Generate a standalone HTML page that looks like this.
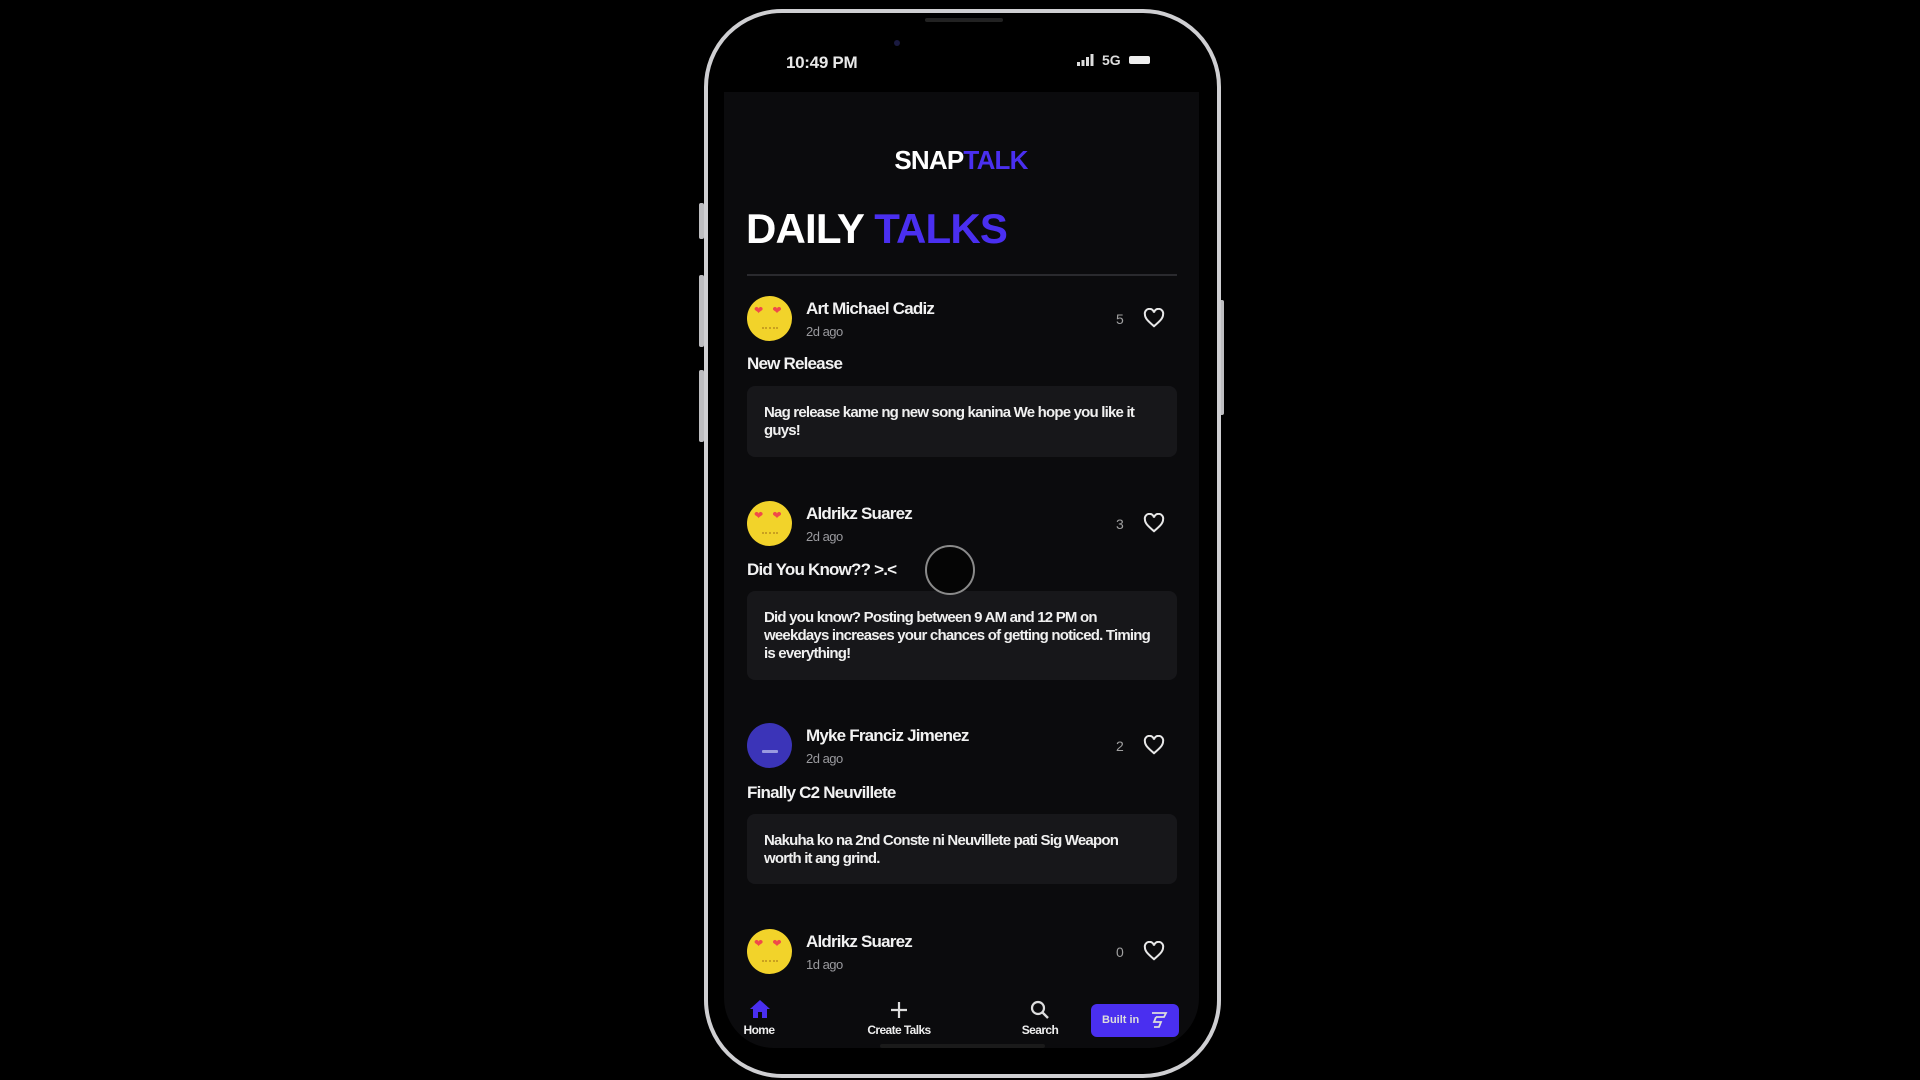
<!DOCTYPE html>
<html><head><meta charset="utf-8"><style>
*{margin:0;padding:0;box-sizing:border-box}
body{width:1920px;height:1080px;background:#000;position:relative;overflow:hidden;font-family:"Liberation Sans",Arial,sans-serif;color:#fff}
.a{position:absolute}
.frame{left:704px;top:9px;width:517px;height:1069px;border:4px solid #cfcfd2;border-radius:78px;background:#000}
.btn{background:#bdbdc0;width:5px;left:699px;border-radius:2px}
.screen{left:724px;top:92px;width:475px;height:956px;background:#0b0b0d;border-radius:0 0 50px 50px}
.name{font-size:17px;font-weight:bold;letter-spacing:-0.8px;color:#f2f2f2}
.date{font-size:13px;color:#9a9a9e;letter-spacing:-0.5px}
.title{font-size:17px;font-weight:bold;letter-spacing:-0.8px;color:#f2f2f2}
.box{left:747px;width:430px;background:#17171a;border-radius:8px;padding:0 24px 0 17px;font-size:15px;font-weight:bold;letter-spacing:-0.8px;line-height:18px;color:#f0f0f0}
.cnt{font-size:14px;color:#a0a0a0;left:1116px}
.av{width:45px;height:45px;border-radius:50%;left:747px;background:#f2d32a}
.nav{font-size:12px;font-weight:bold;letter-spacing:-0.6px;color:#eee;text-align:center;width:100px}
.eyes{font-size:11px;color:#f04a4a;left:754px}
.m{left:762px;width:16px;height:2px;border-top:2px dotted #c9a020}
</style></head><body>
<div class="a btn" style="top:203px;height:36px"></div>
<div class="a btn" style="top:275px;height:72px"></div>
<div class="a btn" style="top:370px;height:72px"></div>
<div class="a btn" style="left:1219px;top:300px;height:115px"></div>
<div class="a frame"></div>
<div class="a" style="left:925px;top:18px;width:78px;height:4px;background:#222;border-radius:2px"></div>
<div class="a" style="left:894px;top:40px;width:6px;height:6px;border-radius:50%;background:#1a1a40"></div>
<div class="a" style="left:786px;top:53px;font-size:17px;font-weight:bold;color:#e8e8e8;letter-spacing:-0.3px">10:49 PM</div>
<svg class="a" style="left:1077px;top:53px" width="78" height="14"><rect x="0" y="9" width="3" height="4" fill="#ddd"/><rect x="4.5" y="7" width="3" height="6" fill="#ddd"/><rect x="9" y="4" width="3" height="9" fill="#ddd"/><rect x="13.5" y="1" width="3" height="12" fill="#ddd"/><text x="25" y="12" font-size="14" font-weight="bold" fill="#ddd" font-family="Liberation Sans">5G</text><rect x="52" y="3" width="21" height="8" rx="2" fill="#eee"/></svg>
<div class="a screen"></div>
<div class="a" style="left:0;width:1920px;top:145px;text-align:center;font-size:26px;font-weight:bold;letter-spacing:-0.8px;padding-left:2px">SNAP<span style="color:#4a2ff0">TALK</span></div>
<div class="a" style="left:746px;top:205px;font-size:42px;font-weight:bold;letter-spacing:-0.8px">DAILY <span style="color:#4a2ff0">TALKS</span></div>
<div class="a" style="left:747px;top:274px;width:430px;height:2px;background:#2a2a2e"></div>

<!-- post 1 -->
<div class="a av" style="top:296px"></div>
<div class="a eyes" style="top:304px">❤&nbsp;&nbsp;&nbsp;❤</div>
<div class="a m" style="top:327px"></div>
<div class="a name" style="left:806px;top:299px">Art Michael Cadiz</div>
<div class="a date" style="left:806px;top:324px">2d ago</div>
<div class="a cnt" style="top:311px">5</div>
<svg class="a" style="left:1143px;top:308px" width="22" height="20" viewBox="0 0 24 22"><path d="M12 20 C5 14 2 11 2 7 A5 5 0 0 1 12 5 A5 5 0 0 1 22 7 C22 11 19 14 12 20Z" fill="none" stroke="#e8e8e8" stroke-width="2.2"/></svg>
<div class="a title" style="left:747px;top:354px">New Release</div>
<div class="a box" style="top:386px;height:71px;padding-top:18px">Nag release kame ng new song kanina We hope you like it guys!</div>

<!-- post 2 -->
<div class="a av" style="top:501px"></div>
<div class="a eyes" style="top:509px">❤&nbsp;&nbsp;&nbsp;❤</div>
<div class="a m" style="top:532px"></div>
<div class="a name" style="left:806px;top:504px">Aldrikz Suarez</div>
<div class="a date" style="left:806px;top:529px">2d ago</div>
<div class="a cnt" style="top:516px">3</div>
<svg class="a" style="left:1143px;top:513px" width="22" height="20" viewBox="0 0 24 22"><path d="M12 20 C5 14 2 11 2 7 A5 5 0 0 1 12 5 A5 5 0 0 1 22 7 C22 11 19 14 12 20Z" fill="none" stroke="#e8e8e8" stroke-width="2.2"/></svg>
<div class="a title" style="left:747px;top:560px">Did You Know?? &gt;.&lt;</div>
<div class="a box" style="top:591px;height:89px;padding-top:18px">Did you know? Posting between 9 AM and 12 PM on weekdays increases your chances of getting noticed. Timing is everything!</div>
<div class="a" style="left:925px;top:545px;width:50px;height:50px;border-radius:50%;border:2px solid #8a8a8a;background:#050505"></div>

<!-- post 3 -->
<div class="a av" style="top:723px;background:#3b34b8"></div>
<div class="a" style="left:762px;top:750px;width:16px;height:3px;background:#9a9ae0;border-radius:1px"></div>
<div class="a name" style="left:806px;top:726px">Myke Franciz Jimenez</div>
<div class="a date" style="left:806px;top:751px">2d ago</div>
<div class="a cnt" style="top:738px">2</div>
<svg class="a" style="left:1143px;top:735px" width="22" height="20" viewBox="0 0 24 22"><path d="M12 20 C5 14 2 11 2 7 A5 5 0 0 1 12 5 A5 5 0 0 1 22 7 C22 11 19 14 12 20Z" fill="none" stroke="#e8e8e8" stroke-width="2.2"/></svg>
<div class="a title" style="left:747px;top:783px">Finally C2 Neuvillete</div>
<div class="a box" style="top:814px;height:70px;padding-top:18px">Nakuha ko na 2nd Conste ni Neuvillete pati Sig Weapon worth it ang grind.</div>

<!-- post 4 -->
<div class="a av" style="top:929px"></div>
<div class="a eyes" style="top:937px">❤&nbsp;&nbsp;&nbsp;❤</div>
<div class="a m" style="top:960px"></div>
<div class="a name" style="left:806px;top:932px">Aldrikz Suarez</div>
<div class="a date" style="left:806px;top:957px">1d ago</div>
<div class="a cnt" style="top:944px">0</div>
<svg class="a" style="left:1143px;top:941px" width="22" height="20" viewBox="0 0 24 22"><path d="M12 20 C5 14 2 11 2 7 A5 5 0 0 1 12 5 A5 5 0 0 1 22 7 C22 11 19 14 12 20Z" fill="none" stroke="#e8e8e8" stroke-width="2.2"/></svg>

<!-- nav -->
<svg class="a" style="left:749px;top:999px" width="22" height="20" viewBox="0 0 22 20"><path d="M11 1 L21 10 H18 V19 H13 V13 H9 V19 H4 V10 H1Z" fill="#4a2ff0"/></svg>
<div class="a nav" style="left:709px;top:1023px">Home</div>
<svg class="a" style="left:889px;top:1000px" width="20" height="20"><path d="M10 2V18M2 10H18" stroke="#ddd" stroke-width="2.2"/></svg>
<div class="a nav" style="left:849px;top:1023px">Create Talks</div>
<svg class="a" style="left:1029px;top:999px" width="22" height="22"><circle cx="9" cy="9" r="6" fill="none" stroke="#ddd" stroke-width="2.2"/><path d="M13.5 13.5L19 19" stroke="#ddd" stroke-width="2.4"/></svg>
<div class="a nav" style="left:990px;top:1023px">Search</div>
<div class="a" style="left:1091px;top:1004px;width:88px;height:33px;background:#4a2ff0;border-radius:6px;font-size:11px;font-weight:bold;color:#ddd;padding:10px 0 0 11px">Built in</div>
<svg class="a" style="left:1148px;top:1009px" width="22" height="22" viewBox="0 0 22 22"><path d="M4 4H18L16 8H8M8 8L6 13H13L11 18H6" fill="none" stroke="#ddd" stroke-width="1.8"/></svg>
<div class="a" style="left:880px;top:1044px;width:165px;height:4px;background:#1a1a1a;border-radius:2px"></div>
</body></html>
